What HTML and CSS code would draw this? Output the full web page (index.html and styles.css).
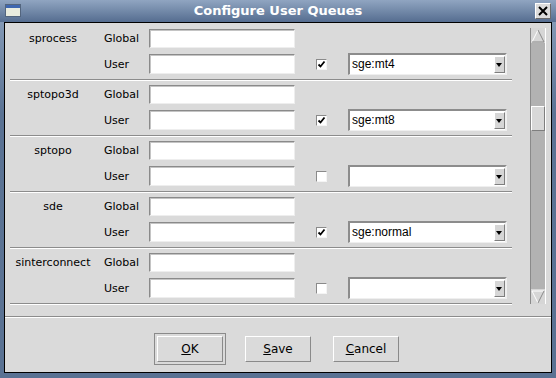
FILE: index.html
```html
<!DOCTYPE html>
<html lang="en">
<head>
  <meta charset="UTF-8">
  <title>Configure User Queues</title>
  <link rel="stylesheet" href="styles.css">
</head>
<body>

  <div class="window">
    <div class="titlebar">
      <svg class="win-icon" width="16" height="13" viewBox="0 0 16 13">
        <rect x="0.5" y="0.5" width="15" height="12" fill="#e9ecdf" stroke="#53657e"/>
        <rect x="1" y="1" width="14" height="3" fill="#3f67b0"/>
      </svg>
      <div class="title">Configure User Queues</div>
      <div class="close-btn">
        <svg width="14" height="14" viewBox="0 0 14 14">
          <path d="M3 3 L11 11 M11 3 L3 11" stroke="#000" stroke-width="2"/>
        </svg>
      </div>
    </div>

    <div class="frame">
      <div class="main">
        <div class="list">

          <div class="group">
            <div class="row">
              <span class="name">sprocess</span>
              <span class="kind">Global</span>
              <input type="text" class="field">
            </div>
            <div class="row user-row">
              <span class="name"></span>
              <span class="kind">User</span>
              <input type="text" class="field">
              <span class="check on"><svg width="9" height="9" viewBox="0 0 9 9"><path d="M1.5 4.5 L3.5 6.5 L7.5 1.5" stroke="#000" stroke-width="1.8" fill="none"/></svg></span>
              <div class="combo"><span class="combo-text">sge:mt4</span><span class="combo-arrow"></span></div>
            </div>
            <div class="separator"></div>
          </div>

          <div class="group">
            <div class="row">
              <span class="name">sptopo3d</span>
              <span class="kind">Global</span>
              <input type="text" class="field">
            </div>
            <div class="row user-row">
              <span class="name"></span>
              <span class="kind">User</span>
              <input type="text" class="field">
              <span class="check on"><svg width="9" height="9" viewBox="0 0 9 9"><path d="M1.5 4.5 L3.5 6.5 L7.5 1.5" stroke="#000" stroke-width="1.8" fill="none"/></svg></span>
              <div class="combo"><span class="combo-text">sge:mt8</span><span class="combo-arrow"></span></div>
            </div>
            <div class="separator"></div>
          </div>

          <div class="group">
            <div class="row">
              <span class="name">sptopo</span>
              <span class="kind">Global</span>
              <input type="text" class="field">
            </div>
            <div class="row user-row">
              <span class="name"></span>
              <span class="kind">User</span>
              <input type="text" class="field">
              <span class="check"></span>
              <div class="combo"><span class="combo-text"></span><span class="combo-arrow"></span></div>
            </div>
            <div class="separator"></div>
          </div>

          <div class="group">
            <div class="row">
              <span class="name">sde</span>
              <span class="kind">Global</span>
              <input type="text" class="field">
            </div>
            <div class="row user-row">
              <span class="name"></span>
              <span class="kind">User</span>
              <input type="text" class="field">
              <span class="check on"><svg width="9" height="9" viewBox="0 0 9 9"><path d="M1.5 4.5 L3.5 6.5 L7.5 1.5" stroke="#000" stroke-width="1.8" fill="none"/></svg></span>
              <div class="combo"><span class="combo-text">sge:normal</span><span class="combo-arrow"></span></div>
            </div>
            <div class="separator"></div>
          </div>

          <div class="group">
            <div class="row">
              <span class="name">sinterconnect</span>
              <span class="kind">Global</span>
              <input type="text" class="field">
            </div>
            <div class="row user-row">
              <span class="name"></span>
              <span class="kind">User</span>
              <input type="text" class="field">
              <span class="check"></span>
              <div class="combo"><span class="combo-text"></span><span class="combo-arrow"></span></div>
            </div>
            <div class="separator"></div>
          </div>

        </div>

        <div class="scrollbar">
          <div class="sb-btn">
            <svg width="14" height="14" viewBox="0 0 14 14">
              <polygon points="7,1 1,13 13,13" fill="#d6d6d6"/>
              <path d="M1 13 L7 1" stroke="#fff" stroke-width="1"/>
              <path d="M7 1 L13 13" stroke="#8a8a8a" stroke-width="1"/>
              <path d="M1 13 L13 13" stroke="#8a8a8a" stroke-width="1"/>
            </svg>
          </div>
          <div class="sb-thumb"></div>
          <div class="sb-fill"></div>
          <div class="sb-btn">
            <svg width="14" height="14" viewBox="0 0 14 14">
              <polygon points="1,1 13,1 7,13" fill="#d6d6d6"/>
              <path d="M1 1 L13 1" stroke="#fff" stroke-width="1"/>
              <path d="M1 1 L7 13" stroke="#fff" stroke-width="1"/>
              <path d="M13 1 L7 13" stroke="#8a8a8a" stroke-width="1"/>
            </svg>
          </div>
        </div>
      </div>

      <div class="separator wide"></div>

      <div class="buttons">
        <button type="button" class="btn focused"><u>O</u>K</button>
        <button type="button" class="btn"><u>S</u>ave</button>
        <button type="button" class="btn"><u>C</u>ancel</button>
      </div>
    </div>
  </div>

</body>
</html>
```

FILE: styles.css
```css
body {
  margin: 0;
  width: 556px;
  height: 378px;
  overflow: hidden;
  background-color: #5f7798;
  font-family: "DejaVu Sans", sans-serif;
  font-size: 11px;
  color: #000;
}

.window {
  width: 556px;
  height: 378px;
  background: linear-gradient(#8ca1bd, #5b7394 30%, #5a7293);
}

.titlebar {
  display: flex;
  align-items: center;
  height: 22px;
  background: linear-gradient(#90a5c1, #556d90);
}

.win-icon {
  margin-left: 5px;
  margin-top: -1px;
}

.title {
  flex: 1;
  text-align: center;
  color: #fff;
  font-weight: bold;
  font-size: 13px;
  line-height: 22px;
}

.close-btn {
  width: 14px;
  height: 14px;
  margin-right: 5px;
  background-color: #dcdcdc;
  border: 1px solid;
  border-color: #fff #6a6a6a #6a6a6a #fff;
  display: flex;
  align-items: center;
  justify-content: center;
}

.frame {
  margin: 0 4px;
  height: 349px;
  border: 1px solid #000;
  background-color: #dadada;
}

.main {
  display: flex;
  height: 293px;
}

.list {
  width: 525px;
  padding-top: 2px;
  overflow: hidden;
}

.group {
  margin-left: 5px;
  width: 502px;
  padding-top: 4px;
}

.row {
  display: flex;
  align-items: center;
  height: 19px;
}

.user-row {
  margin-top: 5px;
  height: 22px;
}

.name {
  width: 86px;
  text-align: center;
  white-space: nowrap;
}

.kind {
  width: 45px;
  margin-left: 8px;
}

.field {
  box-sizing: border-box;
  width: 146px;
  height: 19px;
  margin: 0;
  padding: 0 2px;
  background-color: #fff;
  border: 1px solid;
  border-color: #8a8a8a #eeeeee #eeeeee #8a8a8a;
  box-shadow: inset 1px 1px 0 #c4c4c4;
  font: inherit;
}

.user-row .field {
  height: 20px;
}

.check {
  box-sizing: border-box;
  width: 11px;
  height: 11px;
  margin-left: 21px;
  background-color: #fff;
  border: 1px solid;
  border-color: #8a8a8a #f4f4f4 #f4f4f4 #8a8a8a;
  display: flex;
  align-items: center;
  justify-content: center;
}

.combo {
  box-sizing: border-box;
  display: flex;
  width: 159px;
  height: 22px;
  margin-left: 21px;
  background-color: #fff;
  border-style: solid;
  border-width: 2px 2px 1px 2px;
  border-color: #8c8c8c #efefef #efefef #8c8c8c;
}

.combo-text {
  flex: 1;
  padding-left: 2px;
  font-family: "Liberation Sans", Arial, sans-serif;
  font-size: 12px;
  line-height: 18px;
}

.combo-arrow {
  box-sizing: border-box;
  width: 11px;
  height: 17px;
  margin-top: 1px;
  background-color: #d6d6d6;
  border: 1px solid;
  border-color: #fff #7e7e7e #7e7e7e #fff;
  position: relative;
}

.combo-arrow::after {
  content: "";
  position: absolute;
  left: 1px;
  top: 6px;
  border-left: 3px solid transparent;
  border-right: 3px solid transparent;
  border-top: 4px solid #000;
}

.separator {
  margin-top: 4px;
  height: 0;
  border-top: 1px solid #8c8c8c;
  border-bottom: 1px solid #fff;
}

.separator.wide {
  margin-top: 0;
}

.scrollbar {
  box-sizing: border-box;
  display: flex;
  flex-direction: column;
  width: 16px;
  height: 276px;
  margin-top: 5px;
  background-color: #b2b2b2;
  border-left: 1px solid #8a8a8a;
  border-right: 1px solid #fff;
}

.sb-btn {
  height: 15px;
  display: flex;
  align-items: center;
  justify-content: center;
  background-color: #d6d6d6;
}

.sb-thumb {
  box-sizing: border-box;
  height: 25px;
  margin-top: 63px;
  background-color: #d8d8d8;
  border: 1px solid;
  border-color: #fff #7e7e7e #7e7e7e #fff;
}

.sb-fill {
  flex: 1;
}

.buttons {
  display: flex;
  justify-content: center;
  gap: 22px;
  padding-top: 18px;
}

.btn {
  box-sizing: border-box;
  width: 66px;
  height: 26px;
  padding: 0;
  background-color: #dadada;
  border: 1px solid;
  border-color: #fff #8a8a8a #8a8a8a #fff;
  font-family: "DejaVu Sans", sans-serif;
  font-size: 12px;
  color: #000;
}

.btn.focused {
  box-shadow: 0 0 0 2px #dadada, 0 0 0 3px #8a8a8a;
}
```
